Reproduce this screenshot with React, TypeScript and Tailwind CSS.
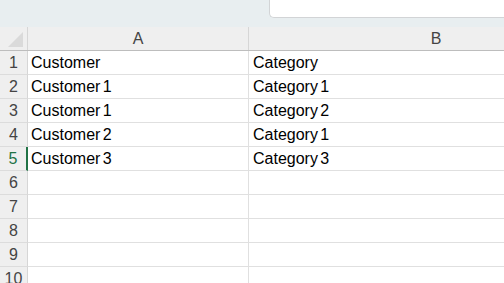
import React from "react";

const rows: [string, string][] = [
  ["Customer", "Category"],
  ["Customer 1", "Category 1"],
  ["Customer 1", "Category 2"],
  ["Customer 2", "Category 1"],
  ["Customer 3", "Category 3"],
  ["", ""],
  ["", ""],
  ["", ""],
  ["", ""],
  ["", ""],
];

export default function App() {
  return (
    <div
      className="w-[504px] h-[283px] overflow-hidden bg-white text-[16px] text-black"
      style={{ fontFamily: '"Liberation Sans", Arial, sans-serif' }}
    >
      <div className="h-[27px] bg-[#e8eef0] flex">
        <div className="w-[269px] shrink-0" />
        <div className="flex-1 h-[18px] bg-white border-l border-b border-[#d2d4d6] rounded-bl-[5px]" />
      </div>
      <div className="flex h-[24px] bg-[#efefef] border-b border-[#bdbdbd]">
        <div className="w-[28px] shrink-0 border-r border-[#d6d6d6] flex items-end justify-end pr-[4px] pb-[3px]">
          <svg width="15" height="15" viewBox="0 0 15 15">
            <polygon points="15,0 15,15 0,15" fill="#dadada" />
          </svg>
        </div>
        <div className="w-[221px] shrink-0 border-r border-[#d6d6d6] flex items-center justify-center text-[#444]">
          A
        </div>
        <div className="w-[374px] shrink-0 flex items-center justify-center text-[#444]">
          B
        </div>
      </div>
      {rows.map((r, i) => {
        const sel = i === 4;
        return (
          <div key={i} className="flex h-[24px]">
            <div
              className={
                sel
                  ? "w-[28px] shrink-0 bg-[#efefef] border-b border-[#dcdcdc] border-r-2 border-r-[#217346] flex items-center justify-center text-[#217346]"
                  : "w-[28px] shrink-0 bg-[#efefef] border-b border-[#dcdcdc] border-r border-r-[#d6d6d6] flex items-center justify-center text-[#444]"
              }
            >
              {i + 1}
            </div>
            <div className="w-[221px] shrink-0 border-b border-r border-[#e0e0e0] flex items-center pl-[3px] whitespace-nowrap [word-spacing:-2px]">
              {r[0]}
            </div>
            <div className="w-[374px] shrink-0 border-b border-[#e0e0e0] flex items-center pl-[4px] whitespace-nowrap [word-spacing:-2px]">
              {r[1]}
            </div>
          </div>
        );
      })}
    </div>
  );
}
